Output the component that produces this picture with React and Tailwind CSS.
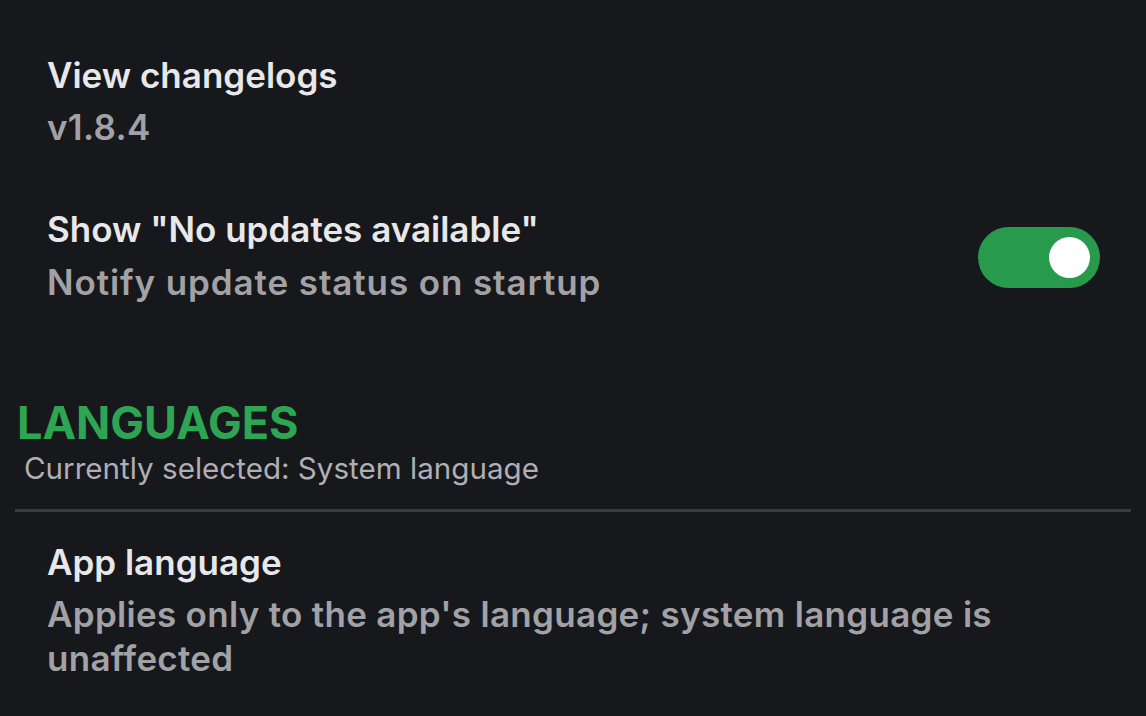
export default function App() {
  const font = { fontFamily: "Inter, 'Noto Sans', sans-serif" };
  return (
    <div className="w-[1146px] h-[716px] overflow-hidden bg-[#17181c]" style={font}>
      <div className="flex flex-col pt-[53px]">
        <div className="flex flex-col pl-[47px] pr-[46px]">
          <div className="text-[35px] leading-[44px] font-semibold text-[#e8e8ea]">View changelogs</div>
          <div className="mt-[8px] text-[35px] leading-[44px] font-semibold tracking-[0.3px] text-[#a2a2a6]">v1.8.4</div>
        </div>
        <div className="flex items-center justify-between pl-[47px] pr-[46px] mt-[58px]">
          <div className="flex flex-col">
            <div className="text-[35px] leading-[44px] font-semibold text-[#e8e8ea]">Show "No updates available"</div>
            <div className="mt-[9px] text-[35px] leading-[44px] font-semibold tracking-[0.9px] text-[#a2a2a6]">Notify update status on startup</div>
          </div>
          <div className="w-[122px] h-[61px] mt-[3px] rounded-full bg-[#279b4b] flex items-center justify-end pr-[10px]">
            <div className="w-[41px] h-[41px] rounded-full bg-white" />
          </div>
        </div>
        <div className="pl-[17px] mt-[95px] text-[45px] leading-[48px] font-bold text-[#2ea552]">LANGUAGES</div>
        <div className="pl-[24px] mt-[2px] text-[29.6px] leading-[38px] font-normal text-[#b0b0b4]">Currently selected: System language</div>
        <div className="mx-[15px] mt-[22px] h-[3px] bg-[#3b3c40]" />
        <div className="flex flex-col pl-[47px] pr-[46px] mt-[28px]">
          <div className="text-[35px] leading-[44px] font-semibold text-[#e8e8ea]">App language</div>
          <div className="mt-[8px] text-[35px] leading-[44px] font-semibold tracking-[0.3px] text-[#a2a2a6] max-w-[1000px]">Applies only to the app's language; system language is unaffected</div>
        </div>
      </div>
    </div>
  );
}
